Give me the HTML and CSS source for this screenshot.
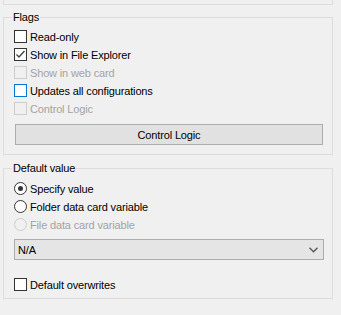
FILE: index.html
```html
<!DOCTYPE html>
<html lang="en">
<head>
  <meta charset="UTF-8" />
  <meta name="viewport" content="width=device-width, initial-scale=1.0"/>
  <title>Property settings</title>
  <link rel="stylesheet" href="styles.css">
</head>
<body>
  <div class="top-panel"></div>

  <fieldset class="group flags">
    <legend>Flags</legend>
    <label class="opt"><span class="box"></span>Read-only</label>
    <label class="opt"><span class="box">
      <svg width="11" height="11" viewBox="0 0 11 11"><polyline points="1.5,5.5 4,8 9.5,2" fill="none" stroke="#444" stroke-width="1.4"/></svg>
    </span>Show in File Explorer</label>
    <label class="opt disabled"><span class="box"></span>Show in web card</label>
    <label class="opt focus"><span class="box"></span>Updates all configurations</label>
    <label class="opt disabled"><span class="box"></span>Control Logic</label>
    <button class="btn">Control Logic</button>
  </fieldset>

  <fieldset class="group defaults">
    <legend>Default value</legend>
    <label class="opt"><span class="radio checked"></span>Specify value</label>
    <label class="opt"><span class="radio"></span>Folder data card variable</label>
    <label class="opt disabled"><span class="radio"></span>File data card variable</label>
    <div class="combo">
      <span>N/A</span>
      <svg width="9" height="6" viewBox="0 0 9 6"><polyline points="0.5,0.8 4.5,4.8 8.5,0.8" fill="none" stroke="#555" stroke-width="1.3"/></svg>
    </div>
    <label class="opt overwrite"><span class="box"></span>Default overwrites</label>
  </fieldset>
</body>
</html>
```

FILE: styles.css
```css
body {
  margin: 0;
  background: #f0f0f0;
  font-family: "Liberation Sans", Arial, sans-serif;
  font-size: 11px;
  letter-spacing: -0.15px;
  color: #000;
}

.top-panel {
  margin: 0 8px 0 3px;
  height: 4px;
  border: 1px solid #dcdcdc;
  border-top: none;
}

.group {
  margin: 6px 8px 0 3px;
  padding: 4px 8px 9px 10px;
  border: 1px solid #dcdcdc;
  min-width: 0;
}

.group legend {
  padding: 0 1px;
  margin-left: -2px;
  line-height: 13px;
}

.defaults {
  margin-top: 7px;
  padding-top: 5px;
  padding-bottom: 4px;
}

.opt {
  display: flex;
  align-items: flex-start;
  height: 18px;
  line-height: 18px;
  white-space: nowrap;
}

.box,
.radio {
  flex: none;
  width: 11px;
  height: 11px;
  margin: 2px 3px 0 0;
  border: 1px solid #333;
  background: #fff;
  display: flex;
  align-items: center;
  justify-content: center;
}

.radio {
  border-radius: 50%;
}

.radio.checked::after {
  content: "";
  width: 5px;
  height: 5px;
  border-radius: 50%;
  background: #333;
}

.disabled {
  color: #a3a3a3;
}

.disabled .box,
.disabled .radio {
  border-color: #cccccc;
  background: #f0f0f0;
}

.focus .box {
  border-color: #0078d7;
}

.btn {
  display: block;
  width: 308px;
  height: 21px;
  margin: 6px 0 0 1px;
  padding: 0;
  border: 1px solid #adadad;
  background: #e1e1e1;
  font: inherit;
  letter-spacing: inherit;
  color: #000;
}

.combo {
  display: flex;
  align-items: center;
  justify-content: space-between;
  height: 19px;
  margin-top: 5px;
  padding: 0 5px 0 3px;
  border: 1px solid #adadad;
  background: #e5e5e5;
}

.overwrite {
  margin-top: 16px;
}
```
